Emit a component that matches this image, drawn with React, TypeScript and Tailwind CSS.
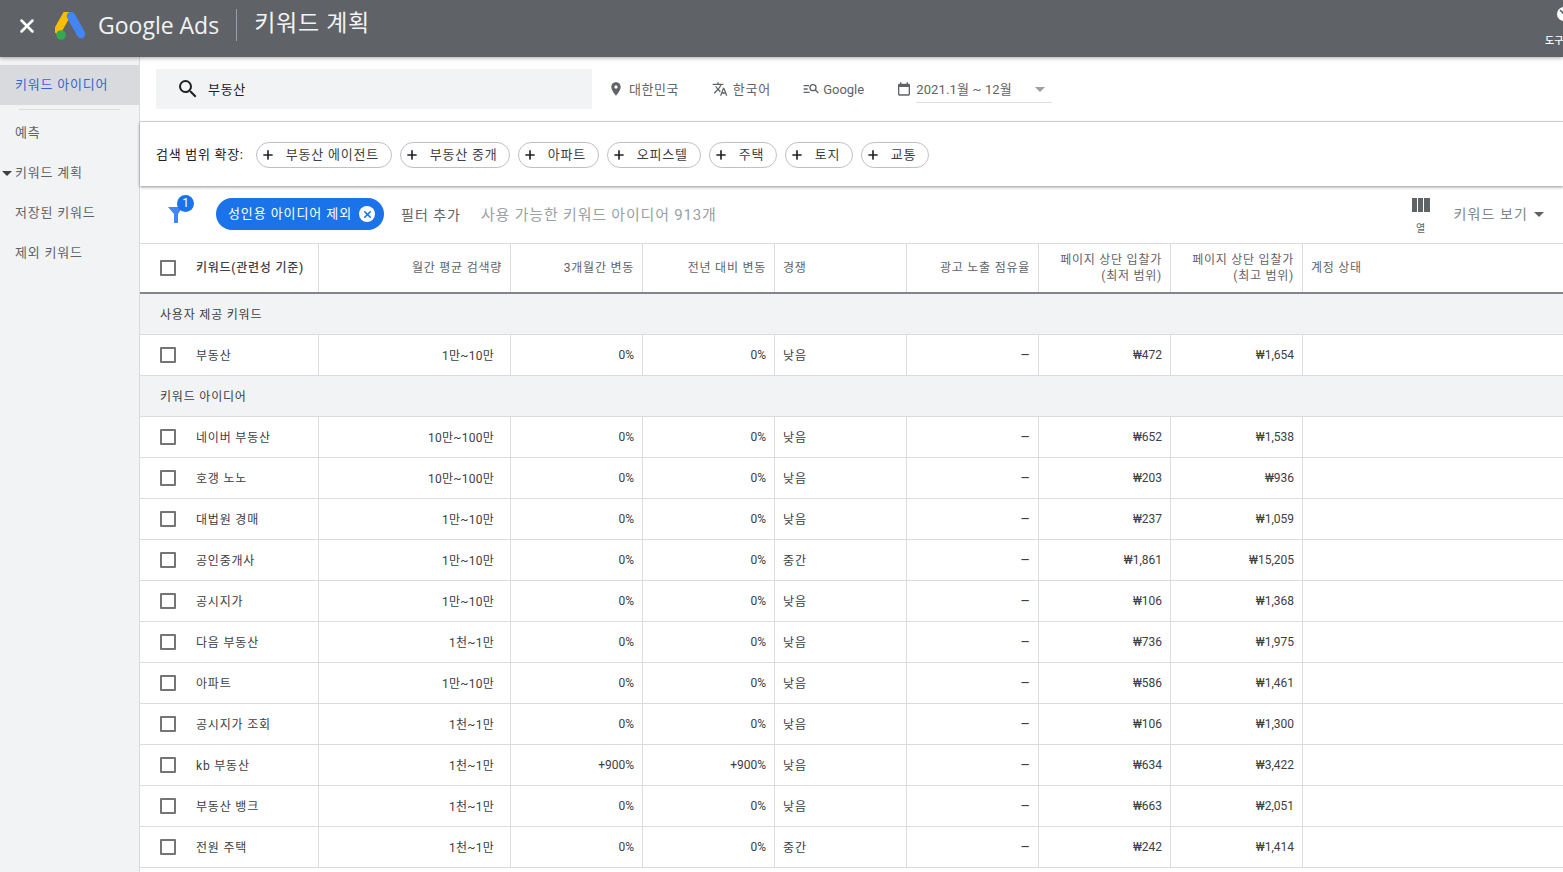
import React from 'react';
import { X, Plus } from 'lucide-react';

const gridCols = 'grid grid-cols-[179px_192px_132px_132px_132px_132px_132px_132px_1fr]';

const sideItems = ['예측', '키워드 계획', '저장된 키워드', '제외 키워드'];
const chips = [
  { label: '부동산 에이전트', w: 'w-[136px]' },
  { label: '부동산 중개', w: 'w-[110px]' },
  { label: '아파트', w: 'w-[81px]' },
  { label: '오피스텔', w: 'w-[94px]' },
  { label: '주택', w: 'w-[68px]' },
  { label: '토지', w: 'w-[68px]' },
  { label: '교통', w: 'w-[68px]' },
];

const rows = [
  ['네이버 부동산', '10만~100만', '0%', '0%', '낮음', '₩652', '₩1,538'],
  ['호갱 노노', '10만~100만', '0%', '0%', '낮음', '₩203', '₩936'],
  ['대법원 경매', '1만~10만', '0%', '0%', '낮음', '₩237', '₩1,059'],
  ['공인중개사', '1만~10만', '0%', '0%', '중간', '₩1,861', '₩15,205'],
  ['공시지가', '1만~10만', '0%', '0%', '낮음', '₩106', '₩1,368'],
  ['다음 부동산', '1천~1만', '0%', '0%', '낮음', '₩736', '₩1,975'],
  ['아파트', '1만~10만', '0%', '0%', '낮음', '₩586', '₩1,461'],
  ['공시지가 조회', '1천~1만', '0%', '0%', '낮음', '₩106', '₩1,300'],
  ['kb 부동산', '1천~1만', '+900%', '+900%', '낮음', '₩634', '₩3,422'],
  ['부동산 뱅크', '1천~1만', '0%', '0%', '낮음', '₩663', '₩2,051'],
  ['전원 주택', '1천~1만', '0%', '0%', '중간', '₩242', '₩1,414'],
];

const AdsLogo = () => (
  <svg width="32" height="28" viewBox="0 0 32 28">
    <path d="M11.5 3 L3 18" stroke="#fbbc04" strokeWidth="8" strokeLinecap="round" />
    <path d="M16 4 L26 22" stroke="#4285f4" strokeWidth="8.5" strokeLinecap="round" />
    <circle cx="6" cy="23" r="4.8" fill="#34a853" />
  </svg>
);

const Checkbox = () => <span className="block w-4 h-4 border-2 border-[#757575] rounded-[1px] bg-white" />;

const Row = ({ r }: { r: string[] }) => (
  <div className={`${gridCols} h-[41px] border-b border-[#dadce0] text-[12px] text-[#3c4043] bg-white`}>
    <div className="flex items-center pl-5 border-r border-[#dadce0]">
      <Checkbox />
      <span className="ml-5 pt-px tracking-[0.8px]">{r[0]}</span>
    </div>
    <div className="flex items-center justify-end pr-4 pt-px tracking-[0.25px] border-r border-[#dadce0]">{r[1]}</div>
    <div className="flex items-center justify-end pr-2 border-r border-[#dadce0]">{r[2]}</div>
    <div className="flex items-center justify-end pr-2 border-r border-[#dadce0]">{r[3]}</div>
    <div className="flex items-center pl-2 pt-px tracking-[1px] border-r border-[#dadce0]">{r[4]}</div>
    <div className="flex items-center justify-end pr-2 text-[15px] border-r border-[#dadce0]">–</div>
    <div className="flex items-center justify-end pr-2 border-r border-[#dadce0]">{r[5]}</div>
    <div className="flex items-center justify-end pr-2 border-r border-[#dadce0]">{r[6]}</div>
    <div />
  </div>
);

const GroupRow = ({ label }: { label: string }) => (
  <div className="h-[41px] flex items-center pl-5 pt-px bg-[#f1f3f4] border-b border-[#dadce0] text-[12px] tracking-[0.8px] text-[#3c4043]">{label}</div>
);

export default function App() {
  return (
    <div className="h-screen w-full overflow-hidden flex flex-col bg-white font-['Roboto','Noto_Sans_CJK_KR',sans-serif]">
      {/* Top bar */}
      <header className="relative z-20 h-[57px] shrink-0 bg-[#5f6368] flex items-center shadow-[0_1px_4px_rgba(0,0,0,0.35)] text-white">
        <X className="ml-[16px] mb-[6px]" size={22} strokeWidth={2.8} />
        <div className="ml-[17px] mb-[6px]"><AdsLogo /></div>
        <span className="ml-[11px] mb-[7px] text-[23px] leading-none font-medium font-['Open_Sans','Roboto',sans-serif] text-[#f1f3f4]">Google Ads</span>
        <span className="ml-[17px] mb-[8px] w-px h-[32px] bg-[#9aa0a6]" />
        <span className="ml-[17px] mb-[11px] text-[23px] leading-none tracking-[0.7px] text-[#f1f3f4]">키워드 계획</span>
        <svg className="absolute right-[-8px] top-[7px]" width="14" height="14" viewBox="0 0 14 14">
          <circle cx="7" cy="7" r="7" fill="#fff" />
          <path d="M3 3l7 7" stroke="#5f6368" strokeWidth="1.6" />
        </svg>
        <span className="absolute left-[1545px] top-[36px] text-[10px] leading-none font-medium whitespace-nowrap">도구</span>
      </header>

      <div className="flex flex-1 min-h-0">
        {/* Left nav */}
        <aside className="w-[140px] shrink-0 bg-[#f1f3f4] border-r border-[#dadce0] pt-[8px] text-[13px] tracking-[0.8px] text-[#5f6368]">
          <div className="h-[40px] flex items-center pl-[15px] bg-[#d9dadd] text-[#3367d6] whitespace-nowrap">키워드 아이디어</div>
          <div className="mx-[19px] mt-[4px] mb-[3px] h-px bg-[#dadce0]" />
          {sideItems.map((s, i) => (
            <div key={s} className="relative h-[40px] flex items-center pl-[15px]">
              {i === 1 && <span className="absolute left-[2px] top-[18px] border-x-[5px] border-x-transparent border-t-[5px] border-t-[#3c4043]" />}
              {s}
            </div>
          ))}
        </aside>

        <main className="flex-1 min-w-0 flex flex-col">
          {/* Search bar */}
          <div className="h-[65px] shrink-0 flex items-center border-b border-[#dadce0] pl-[16px] text-[13px] text-[#5f6368]">
            <div className="w-[436px] h-[40px] bg-[#f1f3f4] flex items-center pl-[20px] text-[#202124]">
              <svg width="24" height="24" viewBox="0 0 24 24" fill="#202124">
                <path d="M15.5 14h-.79l-.28-.27A6.471 6.471 0 0016 9.5 6.5 6.5 0 109.5 16c1.61 0 3.09-.59 4.23-1.57l.27.28v.79l5 4.99L20.49 19l-4.99-5zm-6 0C7.01 14 5 11.99 5 9.5S7.01 5 9.5 5 14 7.01 14 9.5 11.99 14 9.5 14z" />
              </svg>
              <span className="ml-[8px] pt-px tracking-[0.7px]">부동산</span>
            </div>
            <svg className="ml-[16px]" width="16" height="16" viewBox="0 0 24 24" fill="#5f6368">
              <path d="M12 2C8.13 2 5 5.13 5 9c0 5.25 7 13 7 13s7-7.75 7-13c0-3.87-3.13-7-7-7zm0 9.5a2.5 2.5 0 010-5 2.5 2.5 0 010 5z" />
            </svg>
            <span className="ml-[5px] pt-px tracking-[0.5px] whitespace-nowrap">대한민국</span>
            <svg className="ml-[33px]" width="16" height="16" viewBox="0 0 24 24" fill="#5f6368">
              <path d="M12.87 15.07l-2.54-2.51.03-.03A17.52 17.52 0 0014.07 6H17V4h-7V2H8v2H1v2h11.17C11.5 7.92 10.44 9.75 9 11.35 8.07 10.32 7.3 9.19 6.69 8h-2c.73 1.63 1.73 3.17 2.98 4.56l-5.09 5.02L4 19l5-5 3.11 3.11.76-2.04zM18.5 10h-2L12 22h2l1.12-3h4.75L21 22h2l-4.5-12zm-2.62 7l1.62-4.33L19.12 17h-3.24z" />
            </svg>
            <span className="ml-[5px] pt-px tracking-[0.8px] whitespace-nowrap">한국어</span>
            <svg className="ml-[32px]" width="16" height="16" viewBox="0 0 24 24" fill="none" stroke="#5f6368" strokeWidth="2">
              <path d="M1 7h8M1 12h6M1 17h9" />
              <circle cx="15" cy="10" r="4.5" />
              <path d="M18.5 13.5L23 18" />
            </svg>
            <span className="ml-[4px] pt-px">Google</span>
            <svg className="ml-[32px]" width="16" height="16" viewBox="0 0 24 24" fill="#5f6368">
              <path d="M19 4h-1V2h-2v2H8V2H6v2H5a2 2 0 00-2 2v14a2 2 0 002 2h14a2 2 0 002-2V6a2 2 0 00-2-2zm0 16H5V9h14v11z" />
            </svg>
            <div className="ml-[4px] w-[136px] h-[26px] flex items-center justify-between border-b border-[#dadce0] pr-[7px] mt-[2px]">
              <span className="whitespace-nowrap tracking-[0.15px]">2021.1월 ~ 12월</span>
              <span className="border-x-[5px] border-x-transparent border-t-[5px] border-t-[#9aa0a6]" />
            </div>
          </div>

          {/* Broaden search */}
          <div className="relative z-10 h-[64px] shrink-0 flex items-center pl-[16px] pt-px shadow-[0_1px_3px_rgba(0,0,0,0.45)] bg-white text-[13px] text-[#3c4043]">
            <span className="mr-[12px] tracking-[0.7px] whitespace-nowrap text-[#202124]">검색 범위 확장:</span>
            <div className="flex gap-[8px]">
              {chips.map((c) => (
                <div key={c.label} className={`${c.w} h-[26px] rounded-full border border-[#bdc1c6] flex items-center pl-[4px] whitespace-nowrap`}>
                  <Plus size={14} strokeWidth={2.8} className="text-[#202124]" />
                  <span className="ml-[11px] tracking-[0.8px]">{c.label}</span>
                </div>
              ))}
            </div>
          </div>

          {/* Filter row */}
          <div className="relative h-[58px] shrink-0 flex items-center border-b border-[#dadce0] pl-[27px]">
            <div className="relative w-[28px] h-[28px] mt-[-2px]">
              <svg width="18" height="18" viewBox="0 0 18 18" className="absolute left-[1px] top-[6px]">
                <path d="M0 1h15l-5 7v9H6V8z" fill="#4285f4" />
              </svg>
              <span className="absolute left-[10px] top-[-5px] w-[17px] h-[17px] rounded-full bg-[#1a73e8] text-white text-[12px] leading-[17px] text-center">1</span>
            </div>
            <div className="ml-[21px] mb-px w-[168px] h-[32px] rounded-full bg-[#1a73e8] text-white text-[13px] tracking-[0.9px] flex items-center pl-[12px] whitespace-nowrap">
              성인용 아이디어 제외
              <span className="ml-[7px] w-4 h-4 rounded-full bg-white flex items-center justify-center">
                <X size={11} strokeWidth={3.5} className="text-[#1a73e8]" />
              </span>
            </div>
            <span className="ml-[17px] pt-px text-[14px] tracking-[1px] text-[#5f6368] whitespace-nowrap">필터 추가</span>
            <span className="ml-[20px] pt-px text-[15px] tracking-[0.8px] text-[#9aa0a6] whitespace-nowrap">사용 가능한 키워드 아이디어 913개</span>
            <div className="ml-auto mr-[19px] flex items-start">
              <div className="flex flex-col items-center mr-[24px] mt-[3px]">
                <span className="flex gap-px h-[14px]">
                  <span className="w-[5px] bg-[#5f6368]" />
                  <span className="w-[5px] bg-[#5f6368]" />
                  <span className="w-[6px] bg-[#5f6368]" />
                </span>
                <span className="mt-[12px] text-[10px] leading-none text-[#5f6368]">열</span>
              </div>
              <div className="flex items-center mt-[9px] text-[14px] tracking-[1.1px] text-[#80868b] whitespace-nowrap">
                키워드 보기
                <span className="ml-[6px] border-x-[5px] border-x-transparent border-t-[5px] border-t-[#5f6368]" />
              </div>
            </div>
          </div>

          {/* Table header */}
          <div className={`${gridCols} h-[50px] shrink-0 border-b-2 border-[#80868b] text-[12px] tracking-[0.75px] text-[#5f6368] bg-white`}>
            <div className="flex items-center pl-5 border-r border-[#dadce0]">
              <Checkbox />
              <span className="ml-5 font-medium text-[#3c4043] whitespace-nowrap">키워드(관련성 기준)</span>
            </div>
            <div className="flex items-center justify-end pr-2 border-r border-[#dadce0]">월간 평균 검색량</div>
            <div className="flex items-center justify-end pr-2 border-r border-[#dadce0]">3개월간 변동</div>
            <div className="flex items-center justify-end pr-2 border-r border-[#dadce0]">전년 대비 변동</div>
            <div className="flex items-center pl-2 border-r border-[#dadce0]">경쟁</div>
            <div className="flex items-center justify-end pr-2 border-r border-[#dadce0]">광고 노출 점유율</div>
            <div className="flex items-center justify-end text-right leading-[16px] pr-2 border-r border-[#dadce0]">페이지 상단 입찰가<br />(최저 범위)</div>
            <div className="flex items-center justify-end text-right leading-[16px] pr-2 border-r border-[#dadce0]">페이지 상단 입찰가<br />(최고 범위)</div>
            <div className="flex items-center pl-2">계정 상태</div>
          </div>

          <GroupRow label="사용자 제공 키워드" />
          <Row r={['부동산', '1만~10만', '0%', '0%', '낮음', '₩472', '₩1,654']} />
          <GroupRow label="키워드 아이디어" />
          {rows.map((r) => (
            <Row key={r[0]} r={r} />
          ))}
        </main>
      </div>
    </div>
  );
}
